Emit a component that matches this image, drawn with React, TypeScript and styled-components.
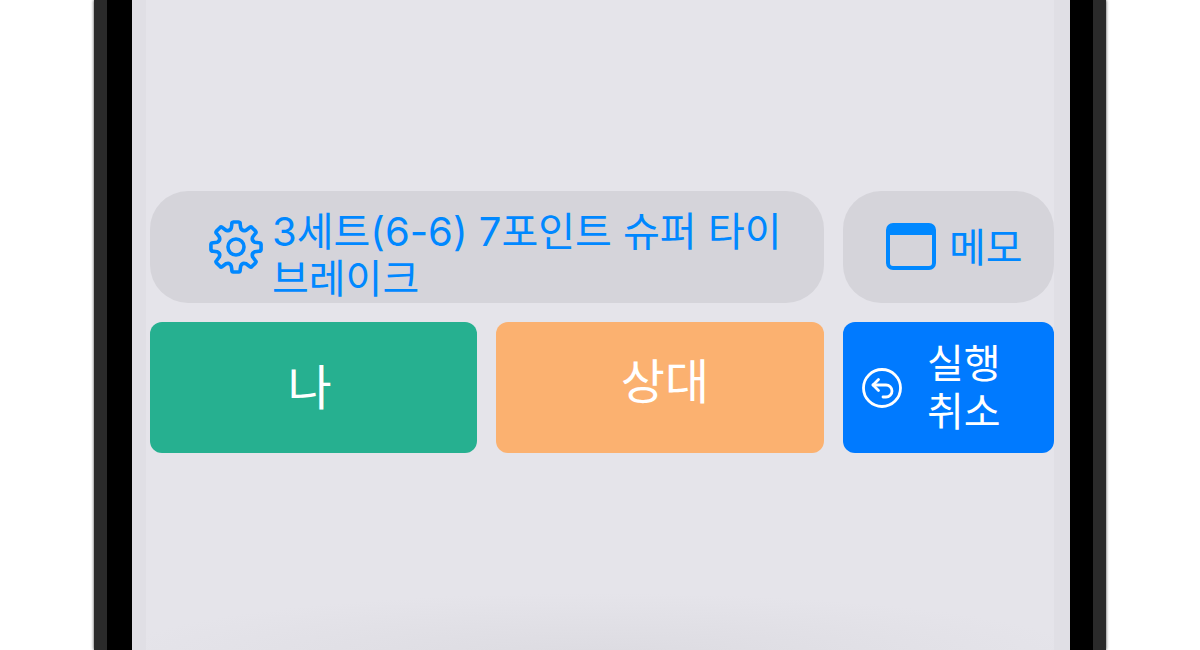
import styled, { createGlobalStyle } from "styled-components";

const GlobalStyle = createGlobalStyle`
  html, body {
    margin: 0;
    padding: 0;
    height: 650px;
    overflow: hidden;
    background: #fff;
    font-family: "Inter", "Noto Sans CJK KR", sans-serif;
  }
`;

const Page = styled.div`
  width: 1200px;
  height: 650px;
  padding: 0 94px;
  box-sizing: border-box;
  background: #fff;
`;

const Bezel = styled.div`
  height: 100%;
  padding: 0 13px;
  background: #2a2a2a;
  box-shadow: 0 0 3px rgba(0, 0, 0, 0.75);
`;

const Glass = styled.div`
  height: 100%;
  padding: 0 23px 0 25px;
  background: #000;
`;

const Screen = styled.div`
  height: 100%;
  padding: 0 16px 0 14px;
  background: #e0dfe5;
`;

const Content = styled.main`
  height: 100%;
  box-sizing: border-box;
  padding: 191px 0 0 4px;
  display: flex;
  flex-direction: column;
  gap: 19px;
  overflow: hidden;
  background:
    radial-gradient(ellipse 490px 65px at 50% 658px, #dcdbe1 0%, rgba(220, 219, 225, 0) 100%),
    #e5e4ea;
`;

const Row = styled.div<{ $height: number }>`
  display: flex;
  gap: 19px;
  height: ${(p) => p.$height}px;
`;

const Pill = styled.div<{ $width: number }>`
  width: ${(p) => p.$width}px;
  flex: none;
  box-sizing: border-box;
  display: flex;
  align-items: center;
  background: #d5d4da;
  border-radius: 38px;
  color: #0088ff;
  font-size: 40px;
  line-height: 47px;
`;

const SettingsPill = styled(Pill)`
  padding-left: 59px;
`;

const MemoPill = styled(Pill)`
  padding-left: 43px;
`;

const SettingsText = styled.span`
  width: 530px;
  margin: 15px 0 0 9px;
`;

const MemoText = styled.span`
  margin-left: 13px;
`;

const MemoIcon = styled.svg`
  flex: none;
  margin-bottom: 2px;
`;

const ActionButton = styled.button<{ $width: number; $color: string; $pad?: string }>`
  width: ${(p) => p.$width}px;
  flex: none;
  display: flex;
  align-items: center;
  justify-content: center;
  padding: ${(p) => p.$pad ?? "0"};
  border: 0;
  border-radius: 12px;
  background: ${(p) => p.$color};
  color: #fff;
  font-family: inherit;
  font-size: 48px;
  line-height: 48px;
`;

const UndoButton = styled(ActionButton)`
  font-size: 40px;
  justify-content: flex-start;
  padding-left: 19px;
`;

const UndoText = styled.span`
  width: 72px;
  margin-left: 25px;
  text-align: center;
  word-break: keep-all;
`;

// 8 tooth gear outline with rounded teeth, centred on 0,0
const gearPath = () => {
  const at = (r: number, deg: number) => {
    const a = ((deg - 90) * Math.PI) / 180;
    return `${(r * Math.cos(a)).toFixed(2)} ${(r * Math.sin(a)).toFixed(2)}`;
  };
  let d = "";
  for (let i = 0; i < 8; i++) {
    const c = i * 45;
    d += `${i === 0 ? "M" : "L"}${at(19.5, c - 14)}L${at(23, c - 10.5)}`;
    d += `Q${at(25.4, c - 10)} ${at(25.2, c - 6)}L${at(25.2, c + 6)}`;
    d += `Q${at(25.4, c + 10)} ${at(23, c + 10.5)}L${at(19.5, c + 14)}`;
    d += `Q${at(16.5, c + 22.5)} ${at(19.5, c + 31)}`;
  }
  return d + "Z";
};

const App = () => {
  return (
    <>
      <GlobalStyle />
      <Page>
        <Bezel>
          <Glass>
            <Screen>
              <Content>
                <Row $height={112}>
                  <SettingsPill $width={674}>
                    <svg width="54" height="54" viewBox="-27 -27 54 54" fill="none" stroke="currentColor" strokeWidth="3.6" strokeLinejoin="round">
                      <path d={gearPath()} />
                      <circle r="8" />
                    </svg>
                    <SettingsText>3세트(6-6) 7포인트 슈퍼 타이브레이크</SettingsText>
                  </SettingsPill>
                  <MemoPill $width={211}>
                    <MemoIcon width="50" height="47" viewBox="0 0 50 47" fill="none">
                      <rect x="2" y="2" width="46" height="43" rx="5" stroke="currentColor" strokeWidth="4" />
                      <path d="M2 12V7a5 5 0 0 1 5-5h36a5 5 0 0 1 5 5v5z" fill="currentColor" />
                    </MemoIcon>
                    <MemoText>메모</MemoText>
                  </MemoPill>
                </Row>
                <Row $height={131}>
                  <ActionButton $width={327} $color="#26b090" $pad="0 8px 0 0">나</ActionButton>
                  <ActionButton $width={328} $color="#fbb170" $pad="0 0 12px 10px">상대</ActionButton>
                  <UndoButton $width={211} $color="#007aff">
                    <svg width="40" height="40" viewBox="0 0 40 40" fill="none" stroke="currentColor" strokeWidth="2.8" strokeLinecap="round" strokeLinejoin="round">
                      <circle cx="20" cy="20" r="18.5" />
                      <path d="M16.5 11.5L11 17l5.5 5.5" />
                      <path d="M11 17H24a6 6 0 0 1 0 12h-3" />
                    </svg>
                    <UndoText>실행 취소</UndoText>
                  </UndoButton>
                </Row>
              </Content>
            </Screen>
          </Glass>
        </Bezel>
      </Page>
    </>
  );
};

export default App;
